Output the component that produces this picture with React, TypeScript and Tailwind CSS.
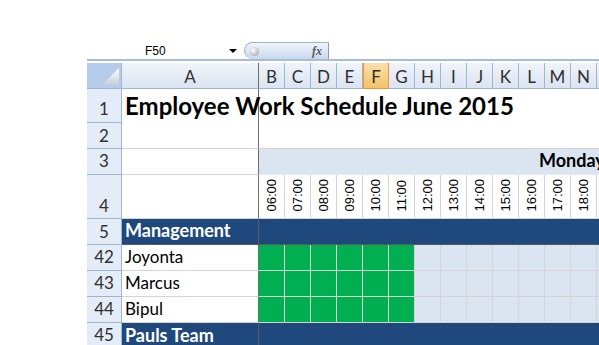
import React from 'react';

const cols = ['B', 'C', 'D', 'E', 'F', 'G', 'H', 'I', 'J', 'K', 'L', 'M', 'N', 'O'];
const hours = ['06:00', '07:00', '08:00', '09:00', '10:00', '11:00', '12:00', '13:00', '14:00', '15:00', '16:00', '17:00', '18:00', ''];
const people = [
  { row: 42, name: 'Joyonta' },
  { row: 43, name: 'Marcus' },
  { row: 44, name: 'Bipul' }
];

// shared cell styles
const rowHead = 'bg-[#e4ecf7] border-r border-b border-[#9eb6ce] flex items-end justify-center pb-[4px] text-[17px] leading-none text-[#303030]';
const freeze = 'border-r border-r-[#6e6e6e]';

const App: React.FC = () => {
  return <div className="w-[599px] h-[345px] overflow-hidden bg-white [font-family:Lato,sans-serif]">
      {/* name box + formula bar */}
      <div className="h-[59px] flex items-end">
        <div className="w-[145px]" />
        <div className="w-[99px] h-[16px] flex items-center">
          <span className="text-[12px] leading-none text-black [font-family:'Liberation_Sans',sans-serif]">F50</span>
          <span className="ml-auto mr-[7px] w-0 h-0 border-l-[4px] border-r-[4px] border-t-[4px] border-l-transparent border-r-transparent border-t-black" />
        </div>
        <div className="w-[85px] h-[17px] rounded-l-full border-t border-l border-r border-[#9fb2cc] border-r-[#8d9cb3] bg-linear-to-b from-[#f1f5fb] to-[#c8d7ec] flex items-center pl-[5px] pr-[6px]">
          <span className="w-[9px] h-[9px] rounded-full bg-[radial-gradient(circle_at_35%_35%,#ffffff,#9a9a9a)]" />
          <span className="ml-auto text-[12px] leading-none italic font-bold text-[#5a5a5a] [font-family:'Liberation_Serif',serif]">fx</span>
        </div>
      </div>
      <div className="ml-[87px] h-[2px] bg-[#a5bcdb]" />
      <div className="h-[2px]" />

      <div className="ml-[87px] grid grid-cols-[35px_137px_repeat(14,26px)] grid-rows-[26px_34px_26px_26px_44px_26px_26px_26px_26px_26px]">
        {/* column headers */}
        <div className="bg-[#b5cced] border-r border-b border-[#9eb6ce]">
          <svg width="35" height="26" className="block">
            <defs>
              <linearGradient id="tri" x1="0" y1="0" x2="0" y2="1">
                <stop offset="0" stopColor="#ffffff" />
                <stop offset="1" stopColor="#c5cedb" />
              </linearGradient>
            </defs>
            <polygon points="15,22 32,22 32,5" fill="url(#tri)" />
          </svg>
        </div>
        <div className={`bg-linear-to-b from-[#f0f4fa] to-[#dbe4f1] border-b border-[#9eb6ce] ${freeze} flex items-end justify-center pb-[3px] text-[17px] leading-none text-[#303030]`}>
          A
        </div>
        {cols.map(c => <div key={c} className={`border-b flex items-end justify-center pb-[3px] text-[17px] leading-none text-[#303030] ${c === 'F' ? 'bg-linear-to-b from-[#fbe0a8] to-[#f2c366] border-x border-[#f29436]' : 'bg-linear-to-b from-[#f0f4fa] to-[#dbe4f1] border-r border-[#9eb6ce]'}`}>
            {c === 'O' ? '' : c}
          </div>)}

        {/* row 1 */}
        <div className={`${rowHead} pb-[5px]`}>1</div>
        <div className={`${freeze} flex items-end pl-[3px] pb-[5px] overflow-visible`}>
          <span className="whitespace-nowrap text-[24px] leading-none font-bold text-black">
            Employee Work Schedule June 2015
          </span>
        </div>
        <div className="col-span-14" />

        {/* row 2 */}
        <div className={rowHead}>2</div>
        <div className={`${freeze} border-b border-b-[#d4d4d4]`} />
        <div className="col-span-14 border-b border-[#d4d4d4]" />

        {/* row 3 */}
        <div className={`${rowHead} pb-[5px]`}>3</div>
        <div className={`${freeze} border-b border-b-[#d4d4d4]`} />
        <div className="col-span-14 bg-[#dbe5f1] border-b border-[#e8edf4] flex items-end pl-[280px] pb-[5px]">
          <span className="text-[18px] leading-none font-bold text-black">Monday</span>
        </div>

        {/* row 4 */}
        <div className={rowHead}>4</div>
        <div className={`${freeze} border-b border-b-[#d4d4d4]`} />
        {hours.map((h, i) => <div key={i} className="border-r border-b border-[#d4d4d4] flex items-end justify-center pb-[6px]">
            <span className="[writing-mode:vertical-rl] rotate-180 text-[13px] leading-none text-black [font-family:'Liberation_Sans',sans-serif]">
              {h}
            </span>
          </div>)}

        {/* row 5 */}
        <div className={rowHead}>5</div>
        <div className="bg-[#1f497d] border-r border-b border-[#5a5a5a] flex items-end pl-[3px] pb-[5px]">
          <span className="text-[18px] leading-none font-bold text-white">Management</span>
        </div>
        <div className="col-span-14 bg-[#1f497d] border-b border-[#5a5a5a]" />

        {/* team members */}
        {people.map(p => <React.Fragment key={p.row}>
            <div className={`${rowHead} pb-[5px]`}>{p.row}</div>
            <div className={`${freeze} border-b border-b-[#d4d4d4] flex items-end pl-[3px] pb-[5px]`}>
              <span className="text-[17px] leading-none text-black">{p.name}</span>
            </div>
            {cols.map((c, i) => <div key={c} className={`border-r border-b border-[#d4d4d4] ${i < 6 ? 'bg-[#00b050]' : 'bg-[#dbe5f1]'}`} />)}
          </React.Fragment>)}

        {/* row 45 */}
        <div className={`${rowHead} pb-[5px]`}>45</div>
        <div className="bg-[#1f497d] border-r border-[#5a5a5a] flex items-end pl-[3px] pb-[5px]">
          <span className="text-[18px] leading-none font-bold text-white">Pauls Team</span>
        </div>
        <div className="col-span-14 bg-[#1f497d]" />
      </div>
    </div>;
};

export default App;
